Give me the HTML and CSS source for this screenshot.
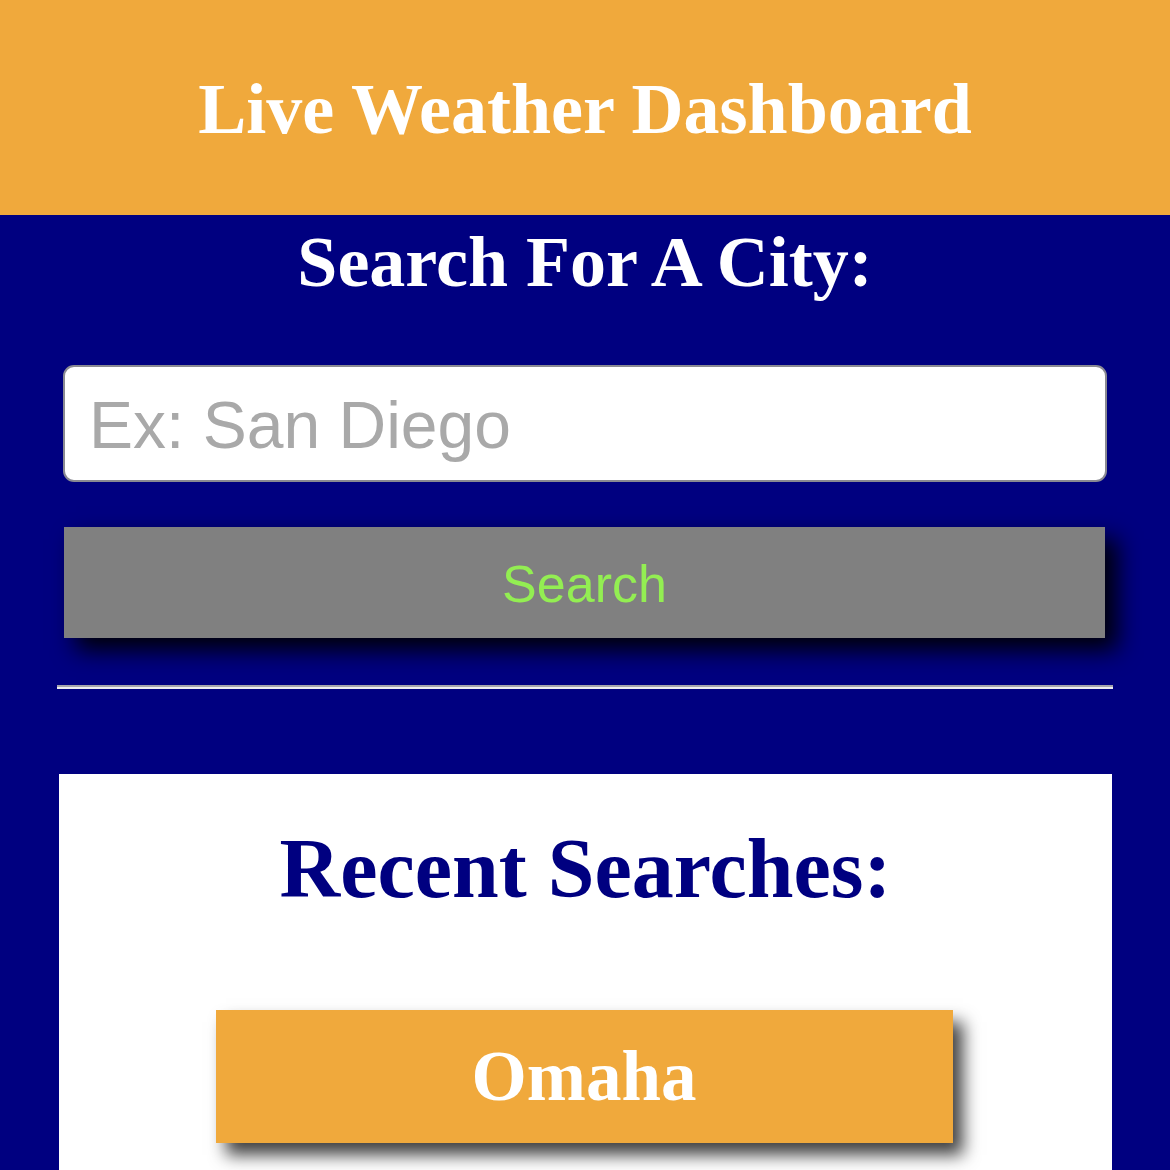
FILE: index.html
```html
<!DOCTYPE html>
<html>
<head>
<meta charset="utf-8">
<title>Live Weather Dashboard</title>
<link rel="stylesheet" href="styles.css">
</head>
<body>
<header class="top">
  <h1 class="title">Live Weather Dashboard</h1>
</header>
<main class="page">
  <section class="search">
    <h2 class="search-title">Search For A City:</h2>
    <input class="city-input" type="text" placeholder="Ex: San Diego">
    <button class="search-btn" type="button">Search</button>
    <hr class="divider">
  </section>
  <section class="recent">
    <h2 class="recent-title">Recent Searches:</h2>
    <button class="city-btn" type="button">Omaha</button>
  </section>
</main>
</body>
</html>
```

FILE: styles.css
```css
html, body {
  margin: 0;
  padding: 0;
}
body {
  background: #000080;
  font-family: "Liberation Serif", "Times New Roman", serif;
  height: 1170px;
  overflow: hidden;
}
.top {
  background: #f0a93c;
  height: 215px;
  display: flex;
  align-items: center;
  justify-content: center;
}
.title {
  margin: 0;
  color: #fff;
  font-size: 72px;
  font-weight: bold;
  line-height: 1;
  padding-top: 2px;
}
.page {
  display: flex;
  flex-direction: column;
}
.search {
  display: flex;
  flex-direction: column;
  padding: 0 57px 0 57px;
}
.search-title {
  margin: 6px 0 0;
  color: #fff;
  text-align: center;
  font-size: 72px;
  font-weight: bold;
  line-height: 82px;
}
.city-input {
  margin: 62px 6px 0;
  height: 117px;
  box-sizing: border-box;
  border: 2px solid #8a8a92;
  border-radius: 11px;
  background: #fff;
  padding: 2px 24px 0;
  font-family: "Liberation Sans", Arial, sans-serif;
  font-size: 66px;
  color: #333;
  outline: none;
}
.city-input::placeholder {
  color: #a9a9a9;
}
.search-btn {
  margin: 45px 8px 0 7px;
  height: 111px;
  border: none;
  background: #808080;
  color: #93ee52;
  font-family: "Liberation Sans", Arial, sans-serif;
  font-size: 52px;
  box-shadow: 12px 12px 22px rgba(0, 0, 0, 0.95);
  padding: 2px 0 0;
}
.divider {
  margin: 47px 0 0;
  height: 0;
  border: none;
  border-top: 2px solid #a4a4ac;
  border-bottom: 2px solid #ececf0;
}
.recent {
  margin: 85px 58px 0 59px;
  background: #fff;
  display: flex;
  flex-direction: column;
  align-items: center;
  height: 420px;
}
.recent-title {
  margin: 50px 0 0;
  color: #000080;
  font-size: 84px;
  font-weight: bold;
  line-height: 90px;
}
.city-btn {
  margin-top: 96px;
  width: 737px;
  height: 133px;
  border: none;
  background: #f0a93c;
  color: #fff;
  font-family: "Liberation Serif", "Times New Roman", serif;
  font-weight: bold;
  font-size: 71px;
  box-shadow: 10px 12px 16px rgba(0, 0, 0, 0.75);
  padding: 0;
  margin-left: -3px;
}
```
